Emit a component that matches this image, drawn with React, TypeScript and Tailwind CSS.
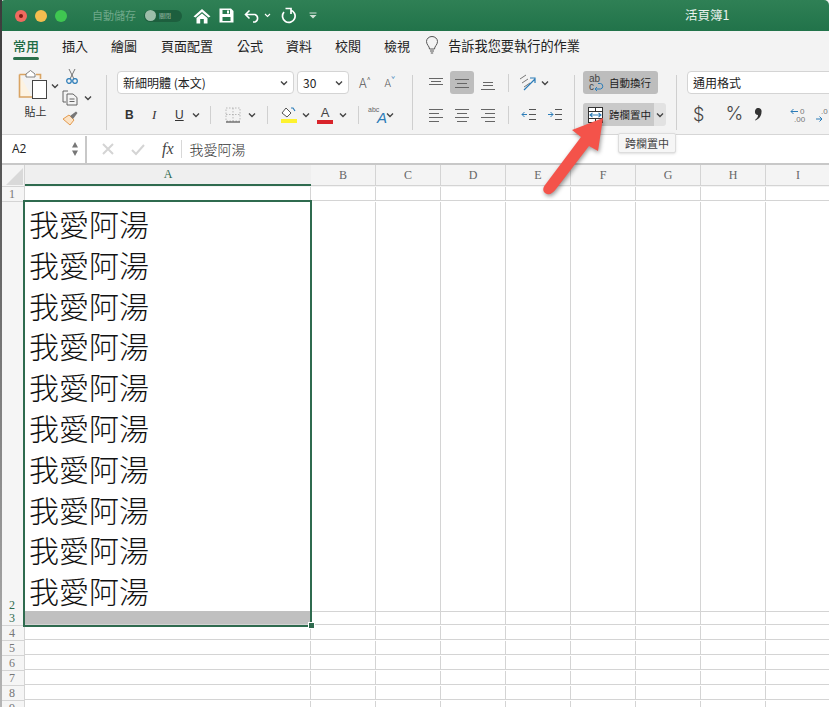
import type { ReactNode } from "react";

const CJK = "font-['Noto_Sans_CJK_TC',sans-serif]";
const SERIF = "font-['Liberation_Serif','Noto_Sans_CJK_TC',serif]";

const Chevron = ({ className = "" }: { className?: string }) => (
    <svg width="8" height="6" viewBox="0 0 8 6" className={className}>
        <path d="M1 1.5 L4 4.5 L7 1.5" fill="none" stroke="#444" strokeWidth="1.4" />
    </svg>
);

const Divider = ({ className = "" }: { className?: string }) => (
    <div className={`h-[18px] w-px bg-[#d0d0d0] ${className}`} />
);

const GroupLine = () => <div className="my-[4px] w-px self-stretch bg-[#cfcfcf]" />;

// ruled lines for the alignment buttons
const Lines = ({ ys, xs }: { ys: number[]; xs: [number, number][] }) => (
    <svg width="16" height="16" viewBox="0 0 16 16">
        {ys.map((y, i) => (
            <path key={i} d={`M${xs[i][0]} ${y + 0.5} H${xs[i][1]}`} stroke="#666" strokeWidth="1" />
        ))}
    </svg>
);

const IconBtn = ({ children, className = "" }: { children: ReactNode; className?: string }) => (
    <div className={`flex h-[23px] items-center justify-center ${className}`}>{children}</div>
);

const TitleBar = () => (
    <div className="flex h-[31px] items-center rounded-t-[5px] bg-gradient-to-b from-[#2f8055] to-[#21734a] pl-[15px]">
        <div className="flex items-center gap-[8px]">
            <div className="flex h-[12px] w-[12px] items-center justify-center rounded-full bg-[#ef6a5f]">
                <div className="h-[4px] w-[4px] rounded-full bg-[#7e1a14]" />
            </div>
            <div className="h-[12px] w-[12px] rounded-full bg-[#f4bd4f]" />
            <div className="h-[12px] w-[12px] rounded-full bg-[#3fc651]" />
        </div>
        <span className={`ml-[25px] text-[11px] text-[#6fa88a] ${CJK}`}>自動儲存</span>
        <div className="ml-[8px] flex h-[12px] w-[38px] items-center rounded-full bg-[#1d5f3e] pl-[1px]">
            <div className="h-[11px] w-[11px] rounded-full bg-[#9dbdaa]" />
            <span className={`ml-[3px] text-[6px] text-[#9dbdaa] ${CJK}`}>關閉</span>
        </div>
        <svg width="18" height="16" viewBox="0 0 18 16" className="ml-[11px]">
            <path d="M9 1 L17.5 8.5 L15.5 9.5 L9 4 L2.5 9.5 L0.5 8.5 Z M3.5 10 L9 5.5 L14.5 10 V15.5 H10.8 V11 H7.2 V15.5 H3.5 Z" fill="#fff" />
        </svg>
        <svg width="15" height="15" viewBox="0 0 15 15" className="ml-[8px]">
            <path fillRule="evenodd" d="M0.5 0.5 H12 L14.5 3 V14.5 H0.5 Z M3.5 2 V6 H11 V2 Z M3.5 9 V13 H11.5 V9 Z M8 2.5 H10 V5.5 H8 Z" fill="#fff" />
        </svg>
        <svg width="17" height="14" viewBox="0 0 17 14" className="ml-[10px]">
            <path d="M5.5 1.5 L1.5 5.5 L5.5 9.5 M1.5 5.5 H11 A4 4 0 0 1 11 13 H9" fill="none" stroke="#fff" strokeWidth="1.6" />
        </svg>
        <svg width="7" height="5" viewBox="0 0 7 5" className="ml-[3px]">
            <path d="M1 1 L3.5 3.5 L6 1" fill="none" stroke="#fff" strokeWidth="1.1" />
        </svg>
        <svg width="16" height="17" viewBox="0 0 16 17" className="ml-[9px]">
            <path d="M4 5 A6.3 6.3 0 1 0 10.5 3 M5.5 1.5 H11 V7" fill="none" stroke="#fff" strokeWidth="1.7" />
        </svg>
        <svg width="8" height="7" viewBox="0 0 8 7" className="ml-[13px]">
            <path d="M0.5 0.5 H7.5 V1.5 H0.5 Z M0.5 3 H7.5 L4 6.5 Z" fill="#cfe0d6" />
        </svg>
        <span className={`ml-[368px] text-[12.5px] text-white/90 ${CJK}`}>活頁簿1</span>
    </div>
);

const tabs: [string, string][] = [
    ["常用", "ml-[13px]"],
    ["插入", "ml-[23px]"],
    ["繪圖", "ml-[23px]"],
    ["頁面配置", "ml-[24px]"],
    ["公式", "ml-[24px]"],
    ["資料", "ml-[23px]"],
    ["校閱", "ml-[23px]"],
    ["檢視", "ml-[23px]"],
];

const TabRow = () => (
    <div className={`flex h-[30px] items-start pt-[6px] text-[13px] leading-[18px] text-[#222] ${CJK}`}>
        {tabs.map(([t, m], i) => (
            <div key={t} className={`relative ${m}`}>
                <span className={i === 0 ? "font-medium text-[#1d6b44]" : ""}>{t}</span>
                {i === 0 && <div className="mt-[2px] h-[3px] rounded-full bg-[#2a6f4b]" />}
            </div>
        ))}
        <svg width="14" height="18" viewBox="0 0 14 18" className="ml-[15px] -mt-[1px]">
            <path d="M4.5 13 C4.5 10 1.5 9 1.5 5.5 A5.5 5 0 0 1 12.5 5.5 C12.5 9 9.5 10 9.5 13 Z M5 15 H9 M5.8 17 H8.2" fill="none" stroke="#555" strokeWidth="1" />
        </svg>
        <span className="ml-[9px] text-[13.2px]">告訴我您要執行的作業</span>
    </div>
);

const Clipboard = () => (
    <div className={`flex w-[106px] shrink-0 ${CJK}`}>
        <div className="ml-[18px] flex w-[30px] flex-col items-center">
            <svg width="30" height="32" viewBox="0 0 30 32" className="-mt-[2px]">
                <path d="M1.5 5.5 H8 M18 5.5 H22.5 V10 M1.5 5.5 V28 H14" fill="#fdf3e2" stroke="#d9a463" strokeWidth="1.6" />
                <path d="M8 5 L12.5 1.5 L17 5 V8 H8 Z" fill="#fff" stroke="#666" strokeWidth="0.8" />
                <rect x="14.5" y="11.5" width="14" height="18" fill="#fff" stroke="#444" strokeWidth="1" />
            </svg>
            <span className="ml-[5px] mt-[3px] whitespace-nowrap text-[11px] leading-[14px] text-[#333]">貼上</span>
        </div>
        <Chevron className="ml-[3px] mt-[12px]" />
        <div className="ml-[3px] flex flex-col items-start">
            <svg width="12" height="17" viewBox="0 0 12 17" className="ml-[4px] mt-[-3px]">
                <path d="M3 1 L8 11 M9 1 L4 11" stroke="#666" strokeWidth="0.9" fill="none" />
                <circle cx="3" cy="13" r="2.3" fill="none" stroke="#2b7cb8" strokeWidth="1.2" />
                <circle cx="9" cy="13" r="2.3" fill="none" stroke="#2b7cb8" strokeWidth="1.2" />
            </svg>
            <div className="mt-[5px] flex items-center">
                <svg width="17" height="16" viewBox="0 0 17 16">
                    <path d="M6 1 H1 V12 H4 M5 4 H11 L15 7.5 V15 H5 Z M7.5 9 H12.5 M7.5 11.5 H12.5" fill="none" stroke="#555" strokeWidth="0.9" />
                </svg>
                <Chevron className="ml-[5px]" />
            </div>
            <svg width="16" height="15" viewBox="0 0 16 15" className="mt-[5px]">
                <path d="M1 8 L7 4 L12 9 L8 14 Z" fill="#fbe3c6" stroke="#e39a4e" strokeWidth="1" />
                <path d="M8 5 L14 0.5 L15.5 2 L11 8" fill="#777" />
            </svg>
        </div>
    </div>
);

const FontGroup = () => (
    <div className="ml-[10px] flex w-[295px] shrink-0 flex-col">
        <div className={`flex h-[23px] items-center ${CJK}`}>
            <div className="flex h-[23px] w-[177px] items-center justify-between rounded-[4px] border border-[#d4d4d4] bg-white pl-[5px] pr-[5px] text-[12px] text-[#222]">
                新細明體 (本文)
                <Chevron />
            </div>
            <div className="ml-[3px] flex h-[23px] w-[52px] items-center justify-between rounded-[4px] border border-[#d4d4d4] bg-white pl-[5px] pr-[5px] text-[12px] text-[#222]">
                30
                <Chevron />
            </div>
            <span className="ml-[10px] text-[13px] font-light text-[#555]">A</span>
            <span className="-mt-[6px] text-[7px] text-[#555]">^</span>
            <span className="ml-[14px] text-[11px] font-light text-[#555]">A</span>
            <span className="-mt-[6px] text-[7px] text-[#2b7cb8]">ˇ</span>
        </div>
        <div className="mt-[9px] flex h-[23px] items-center">
            <span className="ml-[8px] w-[8px] font-['Liberation_Sans'] text-[12px] font-bold text-[#333]">B</span>
            <span className="ml-[19px] w-[6px] font-['Liberation_Serif'] text-[13px] italic text-[#333]">I</span>
            <span className="ml-[17px] w-[9px] font-['Liberation_Sans'] text-[12px] text-[#333] underline">U</span>
            <Chevron className="ml-[8px]" />
            <Divider className="ml-[10px]" />
            <svg width="16" height="16" viewBox="0 0 16 16" className="ml-[14px]">
                <path d="M1 1 H15 V14 H1 Z M8 1 V14 M1 7.5 H15" fill="none" stroke="#aaa" strokeWidth="0.8" strokeDasharray="1.5 1.5" />
                <path d="M1 15 H15" stroke="#333" strokeWidth="1" />
            </svg>
            <Chevron className="ml-[7px]" />
            <Divider className="ml-[11px]" />
            <svg width="18" height="18" viewBox="0 0 18 18" className="ml-[12px]">
                <path d="M6 2 L11 7 L7 11 L2 7 Z" fill="#fff" stroke="#555" strokeWidth="1" />
                <path d="M11 2 H13 L15 5" fill="none" stroke="#2b7cb8" strokeWidth="1.2" />
                <rect x="1" y="13" width="16" height="4" fill="#fdf22f" />
            </svg>
            <Chevron className="ml-[4px]" />
            <div className="ml-[7px] flex w-[16px] flex-col items-center">
                <span className="font-['Liberation_Sans'] text-[13px] leading-[13px] text-[#444]">A</span>
                <div className="mt-[1px] h-[4px] w-[16px] bg-[#d8232a]" />
            </div>
            <Chevron className="ml-[6px]" />
            <Divider className="ml-[11px]" />
            <div className="relative ml-[9px] h-[20px] w-[20px]">
                <span className="absolute left-0 top-0 font-['Liberation_Sans'] text-[7px] leading-[9px] text-[#666]">abc</span>
                <span className="absolute bottom-0 right-[1px] font-['Liberation_Sans'] text-[15px] italic leading-[14px] text-[#2b7cb8]">A</span>
            </div>
            <Chevron className="ml-[-2px]" />
        </div>
    </div>
);

const L = { top: [3, 6, 9], mid: [4, 8, 12], bot: [7, 10, 14] };

const AlignGroup = () => (
    <div className="ml-[11px] flex w-[150px] shrink-0 flex-col">
        <div className="flex h-[23px] items-center">
            <IconBtn className="w-[24px]"><Lines ys={L.top} xs={[[1, 15], [3, 13], [1, 15]]} /></IconBtn>
            <IconBtn className="ml-[2px] w-[24px] rounded-[3px] bg-[#bdbdbd]"><Lines ys={L.mid} xs={[[1, 15], [3, 13], [1, 15]]} /></IconBtn>
            <IconBtn className="ml-[2px] w-[24px]"><Lines ys={L.bot} xs={[[3, 13], [3, 13], [1, 15]]} /></IconBtn>
            <Divider className="ml-[8px]" />
            <svg width="18" height="18" viewBox="0 0 18 18" className="ml-[10px]">
                <path d="M1 5 L7 1 M3 9 L9 5 M5 13 L11 9" stroke="#777" strokeWidth="1" />
                <path d="M5 16 L16 5 M11 4 H16 V9" fill="none" stroke="#2b7cb8" strokeWidth="1.2" />
            </svg>
            <Chevron className="ml-[4px]" />
        </div>
        <div className="mt-[9px] flex h-[23px] items-center">
            <IconBtn className="w-[24px]"><Lines ys={[2, 6, 10, 14]} xs={[[1, 15], [1, 11], [1, 15], [1, 11]]} /></IconBtn>
            <IconBtn className="ml-[2px] w-[24px]"><Lines ys={[2, 6, 10, 14]} xs={[[1, 15], [3, 13], [1, 15], [3, 13]]} /></IconBtn>
            <IconBtn className="ml-[2px] w-[24px]"><Lines ys={[2, 6, 10, 14]} xs={[[1, 15], [5, 15], [1, 15], [5, 15]]} /></IconBtn>
            <Divider className="ml-[8px]" />
            <svg width="16" height="14" viewBox="0 0 16 14" className="ml-[12px]">
                <path d="M8 1.5 H15 M8 6.5 H15 M8 11.5 H15" stroke="#555" strokeWidth="1" />
                <path d="M6 6.5 H1 M3.5 4 L1 6.5 L3.5 9" fill="none" stroke="#2b7cb8" strokeWidth="1" />
            </svg>
            <svg width="16" height="14" viewBox="0 0 16 14" className="ml-[10px]">
                <path d="M8 1.5 H15 M8 6.5 H15 M8 11.5 H15" stroke="#555" strokeWidth="1" />
                <path d="M1 6.5 H6 M3.5 4 L6 6.5 L3.5 9" fill="none" stroke="#2b7cb8" strokeWidth="1" />
            </svg>
        </div>
    </div>
);

const WrapGroup = () => (
    <div className={`ml-[8px] flex w-[93px] shrink-0 flex-col text-[10.5px] text-[#222] ${CJK}`}>
        <div className="flex h-[23px] w-[75px] items-center rounded-[3px] bg-[#bdbdbd] pl-[5px]">
            <svg width="16" height="18" viewBox="0 0 16 18">
                <path d="M10 9.5 H12.5 A2.8 2.8 0 0 1 12.5 15 H7 M9 13 L7 15 L9 17" fill="none" stroke="#2b7cb8" strokeWidth="1" />
                <text x="1" y="8" fontSize="10" fill="#444" fontFamily="Liberation Sans">ab</text>
                <text x="1" y="16" fontSize="10" fill="#444" fontFamily="Liberation Sans">c</text>
            </svg>
            <span className="ml-[5px]">自動換行</span>
        </div>
        <div className="mt-[9px] flex h-[23px] w-[83px] items-center rounded-[3px] bg-[#e2e2e2]">
            <div className="flex h-[23px] w-[71px] items-center rounded-l-[3px] bg-[#c9c9c9] pl-[4px]">
                <svg width="17" height="18" viewBox="0 0 17 18">
                    <rect x="1.5" y="1.5" width="14" height="15" fill="#fff" stroke="#333" strokeWidth="1" />
                    <path d="M1 5.5 H16 M1 12.5 H16 M8.5 1 V5 M8.5 13 V17" stroke="#333" strokeWidth="1" />
                    <path d="M3 9 H14 M5.5 6.8 L3 9 L5.5 11.2 M11.5 6.8 L14 9 L11.5 11.2" fill="none" stroke="#2b7cb8" strokeWidth="1.1" />
                </svg>
                <span className="ml-[5px] whitespace-nowrap">跨欄置中</span>
            </div>
            <Chevron className="ml-[2px]" />
        </div>
    </div>
);

const NumberGroup = () => (
    <div className="ml-[10px] flex flex-1 flex-col overflow-hidden">
        <div className={`flex h-[23px] w-[160px] shrink-0 items-center rounded-[4px] border border-[#d4d4d4] bg-white pl-[5px] text-[12px] text-[#222] ${CJK}`}>
            通用格式
        </div>
        <div className="mt-[9px] flex h-[23px] items-center text-[#444]">
            <span className="ml-[6px] font-['Inter'] text-[18px] font-light">$</span>
            <Chevron className="ml-[8px]" />
            <span className="ml-[13px] font-['Inter'] text-[19px] font-light">%</span>
            <svg width="9" height="13" viewBox="0 0 9 13" className="ml-[11px] shrink-0">
                <path d="M1 3.5 A3.3 3.3 0 1 1 7.5 4 C7.5 8 5 11 1.5 12.5 L1 12 C3 10.5 4 9 4 7 A3.2 3.2 0 0 1 1 3.5 Z" fill="#333" />
            </svg>
            <Divider className="ml-[16px]" />
            <svg width="24" height="16" viewBox="0 0 24 16" className="ml-[11px] shrink-0">
                <path d="M8 4.5 H1 M3.5 2 L1 4.5 L3.5 7" fill="none" stroke="#2b7cb8" strokeWidth="1" />
                <text x="10" y="7" fontSize="8" fill="#777" fontFamily="Liberation Sans">0</text>
                <text x="4" y="15" fontSize="8" fill="#777" fontFamily="Liberation Sans">.00</text>
            </svg>
            <svg width="24" height="16" viewBox="0 0 24 16" className="ml-[1px] shrink-0">
                <text x="6" y="7" fontSize="8" fill="#777" fontFamily="Liberation Sans">.0</text>
                <path d="M1 12 H7 M4.5 9.5 L7 12 L4.5 14.5" fill="none" stroke="#2b7cb8" strokeWidth="1" />
            </svg>
        </div>
    </div>
);

const Ribbon = () => (
    <div className="flex h-[74px] border-b border-[#d6d6d6] pt-[10px]">
        <Clipboard />
        <GroupLine />
        <FontGroup />
        <GroupLine />
        <AlignGroup />
        <GroupLine />
        <WrapGroup />
        <GroupLine />
        <NumberGroup />
    </div>
);

const FormulaBar = () => (
    <div className="flex h-[28px] items-center bg-white">
        <div className="flex h-[27px] w-[87px] items-center justify-between border-r-2 border-[#c8c8c8] pl-[12px] pr-[6px] font-['Open_Sans'] text-[12px] text-[#222]">
            A2
            <svg width="8" height="16" viewBox="0 0 8 16">
                <path d="M4 1 L7 6.5 H1 Z M1 9.5 H7 L4 15 Z" fill="#777" />
            </svg>
        </div>
        <svg width="14" height="14" viewBox="0 0 14 14" className="ml-[14px]">
            <path d="M2 2 L12 12 M12 2 L2 12" stroke="#d4d4d4" strokeWidth="2" />
        </svg>
        <svg width="14" height="14" viewBox="0 0 14 14" className="ml-[16px]">
            <path d="M1 8 L5 12 L13 3" fill="none" stroke="#d4d4d4" strokeWidth="2" />
        </svg>
        <span className="ml-[17px] font-['Liberation_Serif'] text-[16px] italic text-[#444]">fx</span>
        <div className="ml-[7px] h-[18px] w-px bg-[#d8d8d8]" />
        <span className={`ml-[8px] text-[14px] font-light text-[#333] ${CJK}`}>我愛阿湯</span>
    </div>
);

const GRID = "grid grid-cols-[25px_286px_65px_65px_65px_65px_65px_65px_65px_65px]";
const colNames = ["B", "C", "D", "E", "F", "G", "H", "I", ""];

const ColumnHeader = () => (
    <div className={`${GRID} h-[24px] border-t-2 border-[#c8c8c8] bg-[#f4f4f4] ${SERIF}`}>
        <div className="flex items-end justify-end border-r border-[#d4d4d4] pb-[1px] pr-[1px]">
            <div className="h-0 w-0 border-b-[17px] border-l-[17px] border-b-[#d9d9d9] border-l-transparent" />
        </div>
        <div className="flex items-center justify-center border-b-2 border-[#2f6b4f] bg-[#efefef] text-[12px] text-[#2f6b4f]">A</div>
        {colNames.map((c, i) => (
            <div key={i} className="flex items-center justify-center border-b border-r border-[#d4d4d4] text-[12px] text-[#666]">{c}</div>
        ))}
    </div>
);

const rows = [
    { n: "1", h: "h-[15px]" },
    { n: "2", h: "h-[409px]" },
    { n: "3", h: "h-[15px]" },
    { n: "4", h: "h-[15px]" },
    { n: "5", h: "h-[15px]" },
    { n: "6", h: "h-[15px]" },
    { n: "7", h: "h-[15px]" },
    { n: "8", h: "h-[15px]" },
    { n: "9", h: "h-[15px]" },
];

const Sheet = () => (
    <div className="relative">
        {rows.map((r) => (
            <div key={r.n} className={`${GRID} ${r.h}`}>
                <div
                    className={`flex items-end justify-center border-r border-[#d4d4d4] bg-[#f5f5f5] text-[12px] leading-[14px] ${SERIF} ${
                        r.n === "2" || r.n === "3" ? "text-[#2f6b4f]" : "text-[#777]"
                    }`}
                >
                    {r.n}
                </div>
                <div className={`border-b border-r border-[#d4d4d4] ${r.n === "3" ? "bg-[#c0c0c0]" : ""}`}>
                    {r.n === "2" && (
                        <div className={`pl-[4px] pt-[1px] text-[30px] font-light leading-[40.8px] text-[#111] ${CJK}`}>
                            {Array.from({ length: 10 }, (_, i) => (
                                <div key={i}>我愛阿湯</div>
                            ))}
                        </div>
                    )}
                </div>
                {colNames.map((_, i) => (
                    <div key={i} className="border-b border-r border-[#d4d4d4]" />
                ))}
            </div>
        ))}
        {/* selection frame */}
        <div className="absolute left-[23px] top-[13px] h-[427px] w-[289px] border-2 border-[#2f6b4f]" />
        <div className="absolute left-[309px] top-[436px] h-[5px] w-[5px] bg-[#2f6b4f] outline outline-1 outline-white" />
    </div>
);

export default function App() {
    return (
        <div className="relative h-[707px] w-[829px] overflow-hidden bg-[#555]">
            <div className="bg-[#f3f3f3]">
                <TitleBar />
                <TabRow />
                <Ribbon />
            </div>
            <div className="bg-white">
                <FormulaBar />
                <ColumnHeader />
                <Sheet />
            </div>

            {/* desktop showing at the left edge of the window */}
            <div className="absolute left-0 top-0 h-full w-[2px] bg-gradient-to-b from-[#3a3a3a] via-[#777] to-[#b5b5b5]" />

            {/* tooltip */}
            <div className={`absolute left-[618px] top-[133px] flex h-[20px] w-[58px] items-center justify-center rounded-[2px] border border-[#ddd] bg-[#f6f6f6] text-[11px] text-[#444] shadow-sm ${CJK}`}>
                跨欄置中
            </div>

            {/* callout arrow */}
            <svg width="80" height="100" viewBox="0 0 80 100" className="absolute left-[535px] top-[110px] drop-shadow-[1px_2px_2px_rgba(0,0,0,0.4)]">
                <path d="M68 8 L37 20 L46 27 L10 75 C7 79 8 83 12 84 C15 85 18 83 21 79 L54 36 L63 41 Z" fill="#f4534a" />
            </svg>
        </div>
    );
}
